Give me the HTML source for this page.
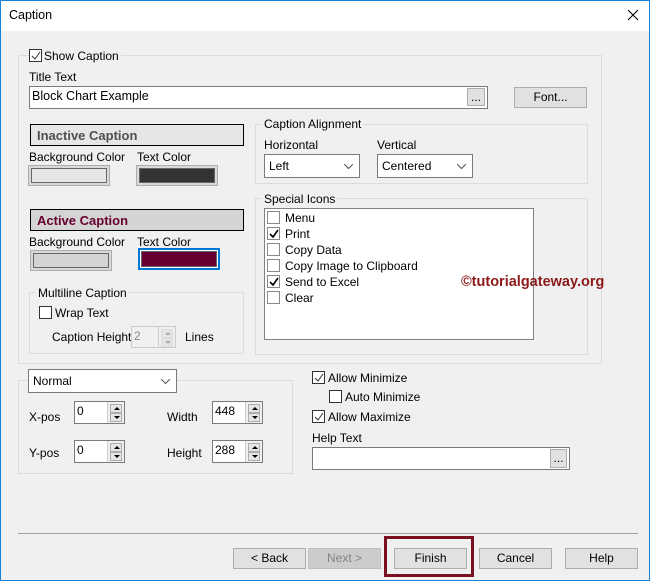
<!DOCTYPE html>
<html><head><style>
*{margin:0;padding:0;box-sizing:border-box}
body{width:650px;height:581px;background:#f0f0f0;font-family:"Liberation Sans",sans-serif;font-size:12px;color:#000;position:relative;overflow:hidden}
.a{position:absolute;white-space:nowrap}
.win{position:absolute;left:0;top:0;width:650px;height:581px;border:1px solid #1883d7;pointer-events:none}
.grp{position:absolute;border:1px solid #dcdcdc}
.lab{position:absolute;background:#f0f0f0;padding:0 2px;white-space:nowrap}
.tb{position:absolute;background:#fff;border:1px solid #7a7a7a}
.cb{position:absolute;width:13px;height:13px;border:1px solid #333;background:#fff}
.cb svg{position:absolute;left:1px;top:1px}
.btn{position:absolute;background:#e1e1e1;border:1px solid #adadad;text-align:center;line-height:19px}
.combo{position:absolute;background:#fff;border:1px solid #7a7a7a;padding-left:4px;line-height:22px}
.combo svg{position:absolute;right:6px;top:9px}
.spin{position:absolute;background:#fff;border:1px solid #7a7a7a;padding-left:2px;line-height:19px}
.spin .ar{position:absolute;right:0;top:0;width:17px;height:100%;border-left:1px solid #ccc;background:#f0f0f0}
.spin .ar i{position:absolute;left:2px;width:12px;height:9px;border:1px solid #adadad;background:#e5e5e5}
.spin .ar i:before{content:"";position:absolute;left:3px;top:2px;border-left:3px solid transparent;border-right:3px solid transparent}
.spin .ar i.u:before{border-bottom:3px solid #000}
.spin .ar i.d:before{border-top:3px solid #000}
.spin.dis .ar i:before{border-top-color:#aaa;border-bottom-color:#aaa}
</style></head><body>
<div class="a" style="left:0;top:0;width:650px;height:31px;background:#fff"></div>
<div class="a" style="left:9px;top:8px;font-size:12.5px">Caption</div>
<svg class="a" style="left:627px;top:9px" width="12" height="12"><path d="M1 1L11 11M11 1L1 11" stroke="#000" stroke-width="1.1"/></svg>

<div class="grp" style="left:18px;top:55px;width:584px;height:309px"></div>
<div class="cb" style="left:29px;top:49px"><svg width="10" height="10"><path d="M1 5L4 8L9 1" stroke="#333" fill="none" stroke-width="1"/></svg></div>
<div class="lab" style="left:42px;top:49px">Show Caption</div>
<div class="a" style="left:29px;top:70px">Title Text</div>
<div class="tb" style="left:29px;top:86px;width:459px;height:23px"></div>
<div class="a" style="left:32px;top:89px;font-size:12.5px">Block Chart Example</div>
<div class="btn" style="left:467px;top:88px;width:18px;height:18px;line-height:16px">...</div>
<div class="btn" style="left:514px;top:87px;width:73px;height:21px">Font...</div>

<div class="a" style="left:30px;top:124px;width:214px;height:22px;background:#e6e6e6;border:1px solid #000;font-weight:bold;font-size:13px;color:#505050;padding:3px 0 0 6px">Inactive Caption</div>
<div class="a" style="left:29px;top:150px">Background Color</div>
<div class="a" style="left:137px;top:150px">Text Color</div>
<div class="a" style="left:28px;top:165px;width:82px;height:21px;border:1px solid #adadad;background:#d9d9d9;padding:2px"><div style="width:100%;height:100%;border:1px solid #666;background:#e6e6e6"></div></div>
<div class="a" style="left:136px;top:165px;width:82px;height:21px;border:1px solid #adadad;background:#d9d9d9;padding:2px"><div style="width:100%;height:100%;border:1px solid #666;background:#333"></div></div>

<div class="a" style="left:30px;top:209px;width:214px;height:22px;background:#d4d4d4;border:1px solid #000;font-weight:bold;font-size:13px;color:#650030;padding:3px 0 0 6px">Active Caption</div>
<div class="a" style="left:29px;top:235px">Background Color</div>
<div class="a" style="left:137px;top:235px">Text Color</div>
<div class="a" style="left:30px;top:250px;width:82px;height:21px;border:1px solid #adadad;background:#d9d9d9;padding:2px"><div style="width:100%;height:100%;border:1px solid #666;background:#d4d4d4"></div></div>
<div class="a" style="left:138px;top:248px;width:82px;height:22px;border:2px solid #0078d7;background:#fff;padding:1px"><div style="width:100%;height:100%;border:1px solid #666;background:#650030"></div></div>

<div class="grp" style="left:29px;top:292px;width:215px;height:62px"></div>
<div class="lab" style="left:36px;top:286px">Multiline Caption</div>
<div class="cb" style="left:39px;top:306px"></div>
<div class="a" style="left:55px;top:306px">Wrap Text</div>
<div class="a" style="left:52px;top:330px">Caption Height</div>
<div class="spin dis" style="left:131px;top:326px;width:45px;height:22px;border-color:#ccc;color:#888;background:#f0f0f0">2<div class="ar"><i class="u" style="top:2px;border-color:#ddd"></i><i class="d" style="top:11px;border-color:#ddd"></i></div></div>
<div class="a" style="left:185px;top:330px">Lines</div>

<div class="grp" style="left:255px;top:124px;width:333px;height:60px"></div>
<div class="lab" style="left:262px;top:117px">Caption Alignment</div>
<div class="a" style="left:264px;top:138px">Horizontal</div>
<div class="a" style="left:377px;top:138px">Vertical</div>
<div class="combo" style="left:264px;top:154px;width:96px;height:24px">Left<svg width="9" height="6"><path d="M0 0L4.5 4.5L9 0" stroke="#555" fill="none"/></svg></div>
<div class="combo" style="left:377px;top:154px;width:96px;height:24px">Centered<svg width="9" height="6"><path d="M0 0L4.5 4.5L9 0" stroke="#555" fill="none"/></svg></div>

<div class="grp" style="left:255px;top:198px;width:333px;height:157px"></div>
<div class="lab" style="left:262px;top:192px">Special Icons</div>
<div class="a" style="left:264px;top:208px;width:270px;height:132px;background:#fff;border:1px solid #828282"></div>
<div class="cb" style="left:267px;top:211px;border-color:#888"></div><div class="a" style="left:285px;top:211px">Menu</div>
<div class="cb" style="left:267px;top:227px;border-color:#888"><svg width="10" height="10"><path d="M1 5L4 8L9 1" stroke="#000" fill="none" stroke-width="1.6"/></svg></div><div class="a" style="left:285px;top:227px">Print</div>
<div class="cb" style="left:267px;top:243px;border-color:#888"></div><div class="a" style="left:285px;top:243px">Copy Data</div>
<div class="cb" style="left:267px;top:259px;border-color:#888"></div><div class="a" style="left:285px;top:259px">Copy Image to Clipboard</div>
<div class="cb" style="left:267px;top:275px;border-color:#888"><svg width="10" height="10"><path d="M1 5L4 8L9 1" stroke="#000" fill="none" stroke-width="1.6"/></svg></div><div class="a" style="left:285px;top:275px">Send to Excel</div>
<div class="cb" style="left:267px;top:291px;border-color:#888"></div><div class="a" style="left:285px;top:291px">Clear</div>
<div class="a" style="left:461px;top:274px;font-weight:bold;font-size:14.5px;color:#8b1a1a">©tutorialgateway.org</div>

<div class="grp" style="left:18px;top:380px;width:275px;height:94px"></div>
<div class="combo" style="left:28px;top:369px;width:149px;height:24px">Normal<svg width="9" height="6"><path d="M0 0L4.5 4.5L9 0" stroke="#555" fill="none"/></svg></div>
<div class="a" style="left:29px;top:410px">X-pos</div>
<div class="spin" style="left:74px;top:401px;width:51px;height:23px">0<div class="ar"><i class="u" style="top:2px"></i><i class="d" style="top:11px"></i></div></div>
<div class="a" style="left:167px;top:410px">Width</div>
<div class="spin" style="left:212px;top:401px;width:51px;height:23px">448<div class="ar"><i class="u" style="top:2px"></i><i class="d" style="top:11px"></i></div></div>
<div class="a" style="left:29px;top:446px">Y-pos</div>
<div class="spin" style="left:74px;top:440px;width:51px;height:23px">0<div class="ar"><i class="u" style="top:2px"></i><i class="d" style="top:11px"></i></div></div>
<div class="a" style="left:167px;top:446px">Height</div>
<div class="spin" style="left:212px;top:440px;width:51px;height:23px">288<div class="ar"><i class="u" style="top:2px"></i><i class="d" style="top:11px"></i></div></div>

<div class="cb" style="left:312px;top:371px"><svg width="10" height="10"><path d="M1 5L4 8L9 1" stroke="#333" fill="none"/></svg></div><div class="a" style="left:328px;top:371px">Allow Minimize</div>
<div class="cb" style="left:329px;top:390px"></div><div class="a" style="left:345px;top:390px">Auto Minimize</div>
<div class="cb" style="left:312px;top:410px"><svg width="10" height="10"><path d="M1 5L4 8L9 1" stroke="#333" fill="none"/></svg></div><div class="a" style="left:328px;top:410px">Allow Maximize</div>
<div class="a" style="left:312px;top:431px">Help Text</div>
<div class="tb" style="left:312px;top:447px;width:258px;height:23px"></div>
<div class="btn" style="left:550px;top:449px;width:17px;height:19px;line-height:17px">...</div>

<div class="a" style="left:18px;top:533px;width:620px;height:1px;background:#a0a0a0"></div>
<div class="btn" style="left:233px;top:548px;width:73px;height:21px">&lt; Back</div>
<div class="btn" style="left:308px;top:548px;width:73px;height:21px;background:#ccc;border-color:#bfbfbf;color:#838383">Next &gt;</div>
<div class="btn" style="left:394px;top:548px;width:73px;height:21px">Finish</div>
<div class="btn" style="left:479px;top:548px;width:73px;height:21px">Cancel</div>
<div class="btn" style="left:565px;top:548px;width:73px;height:21px">Help</div>
<div class="a" style="left:384px;top:536px;width:90px;height:41px;border:3px solid #7b1020"></div>
<div class="win"></div>
</body></html>
